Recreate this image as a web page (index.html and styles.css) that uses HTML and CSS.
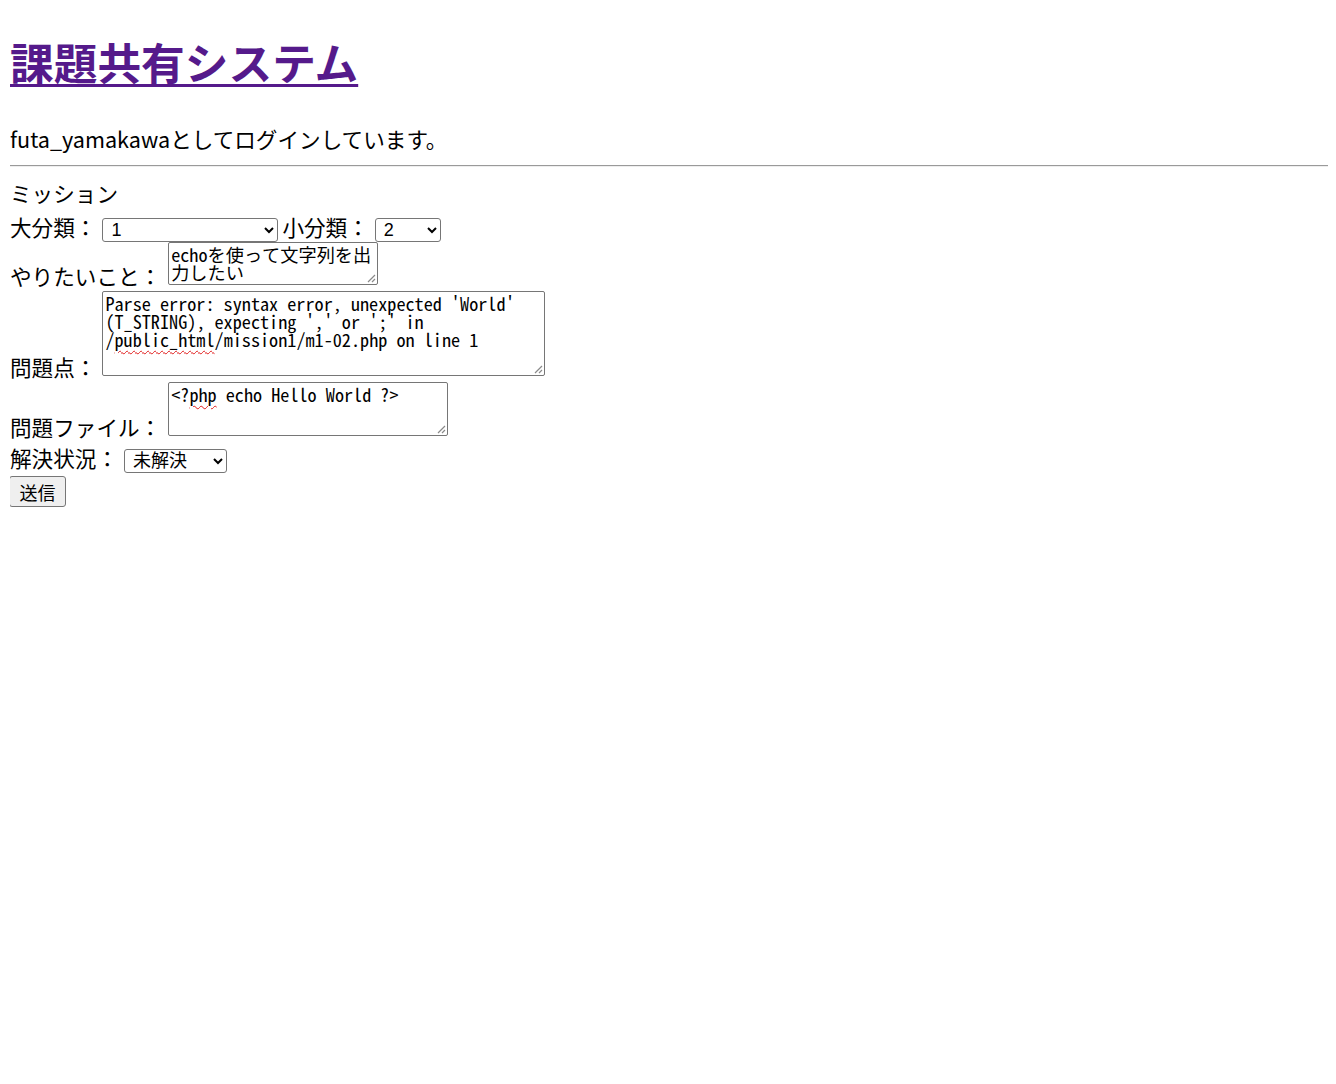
FILE: index.html
```html
<!DOCTYPE html>
<html lang="ja">
<head>
<meta charset="utf-8">
<title>課題共有システム</title>
<link rel="stylesheet" href="styles.css">
</head>
<body>
<h1 class="title"><a class="title-link" href="#">課題共有システム</a></h1>
<p class="login">futa_yamakawaとしてログインしています。</p>
<hr class="rule">
<form class="mission">
  <div class="row">ミッション</div>
  <div class="row row-cat">大分類：<select class="sel sel-large"><option>1</option></select><span class="gap"></span>小分類：<select class="sel sel-small"><option>2</option></select></div>
  <div class="row">やりたいこと：<div class="ta ta-want">echoを使って文字列を出力したい<svg class="grip" width="9" height="9" viewBox="0 0 9 9"><path d="M8 1L1 8M8 5L5 8" stroke="#8a8a8a" stroke-width="1.2"/></svg></div></div>
  <div class="row">問題点：<div class="ta ta-problem">Parse error: syntax error, unexpected 'World' (T_STRING), expecting ',' or ';' in /<span class="sp">public_html</span>/mission1/m1-02.php on line 1<svg class="grip" width="9" height="9" viewBox="0 0 9 9"><path d="M8 1L1 8M8 5L5 8" stroke="#8a8a8a" stroke-width="1.2"/></svg></div></div>
  <div class="row">問題ファイル：<div class="ta ta-file">&lt;?<span class="sp">php</span> echo Hello World ?&gt;<svg class="grip" width="9" height="9" viewBox="0 0 9 9"><path d="M8 1L1 8M8 5L5 8" stroke="#8a8a8a" stroke-width="1.2"/></svg></div></div>
  <div class="row">解決状況：<select class="sel sel-status"><option>未解決</option></select></div>
  <div class="row"><button class="send" type="button">送信</button></div>
</form>
</body>
</html>
```
FILE: styles.css
```css
html, body {
  background: #ffffff;
}
body {
  margin: 8px 8px 8px 10px;
  font-family: "Noto Sans CJK JP", "Noto Sans", sans-serif;
  font-size: 21.6px;
  color: #000000;
}
.title {
  font-size: 43.7px;
  font-weight: bold;
  margin: 21px 0 30px 0;
}
.title-link {
  color: #551a8b;
  text-decoration: underline;
  text-decoration-thickness: 3px;
  text-underline-offset: 4px;
}
.login {
  margin: 0;
}
.rule {
  margin: 11px 0 10px -1px;
  border: none;
  border-top: 1px solid #9a9a9a;
  border-bottom: 1px solid #eeeeee;
  height: 0;
}
.mission {
  margin: 0;
}
.row {
  line-height: normal;
}
.row-cat {
  margin-top: 3px;
}
.sel {
  font-family: "Liberation Sans", "Noto Sans CJK JP", sans-serif;
  font-size: 18px;
  height: 24px;
  margin: 0 0 0 6px;
  padding: 0 4px;
  border: 1px solid #767676;
  border-radius: 3px;
  background: #ffffff;
  color: #000000;
  vertical-align: baseline;
}
.sel-large { width: 176px; }
.sel-small { width: 66px; }
.sel-status { width: 103px; }
.gap {
  display: inline-block;
  width: 4px;
}
.ta {
  position: relative;
  display: inline-block;
  overflow: hidden;
  box-sizing: border-box;
  vertical-align: baseline;
  margin-left: 7px;
  padding: 2px 3px 3px 2px;
  border: 1px solid #767676;
  border-radius: 2px;
  font-family: "Noto Sans Mono CJK JP", "Liberation Mono", monospace;
  font-size: 18.2px;
  line-height: 18px;
  white-space: pre-wrap;
  word-break: break-all;
  background: #ffffff;
}
.ta-want { width: 210px; height: 43px; }
.ta-problem { width: 443px; height: 85px; margin-left: 6px; word-break: normal; }
.ta-file { width: 280px; height: 54px; }
.grip {
  position: absolute;
  right: 1px;
  bottom: 1px;
}
.sp {
  text-decoration: underline wavy #e01b1b;
  text-decoration-thickness: 1px;
  text-underline-offset: 3px;
}
.send {
  font-family: "Noto Sans CJK JP", sans-serif;
  font-size: 18px;
  width: 57px;
  height: 31px;
  margin: 3px 0 0 -1px;
  padding: 0;
  border: 1px solid #767676;
  border-radius: 3px;
  background: #efefef;
  color: #000000;
}
```
